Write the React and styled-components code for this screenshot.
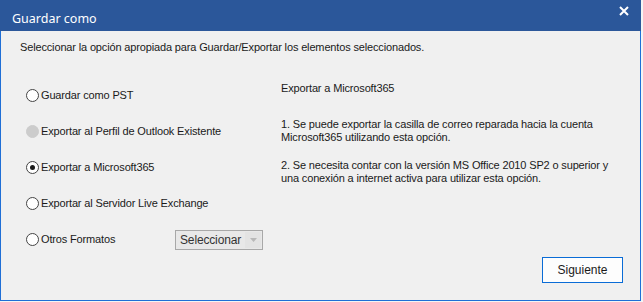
import React, { useState } from "react";
import styled, { createGlobalStyle } from "styled-components";

const GlobalStyle = createGlobalStyle`
  body {
    margin: 0;
    background: #f4f4f4;
    font-family: "Liberation Sans", Arial, sans-serif;
  }
`;

const options = [
  { id: "pst", label: "Guardar como PST" },
  { id: "outlook", label: "Exportar al Perfil de Outlook Existente", disabled: true },
  { id: "m365", label: "Exportar a Microsoft365" },
  { id: "live", label: "Exportar al Servidor Live Exchange" },
  { id: "otros", label: "Otros Formatos", select: true },
];

const App = () => {
  const [selected, setSelected] = useState("m365");

  return (
    <>
      <GlobalStyle />
      <Window>
        <TitleBar>
          <Title>Guardar como</Title>
          <CloseBtn aria-label="Cerrar">
            <svg width="10" height="10" viewBox="0 0 10 10">
              <path d="M1 1 L9 9 M9 1 L1 9" stroke="#fff" strokeWidth="2" />
            </svg>
          </CloseBtn>
        </TitleBar>
        <Body>
          <Intro>Seleccionar la opción apropiada para Guardar/Exportar los elementos seleccionados.</Intro>
          <Columns>
            <OptionList>
              {options.map((o) => (
                <OptionRow key={o.id}>
                  <RadioLabel onClick={() => !o.disabled && setSelected(o.id)}>
                    <Radio $checked={selected === o.id} $disabled={o.disabled} />
                    {o.label}
                  </RadioLabel>
                  {o.select && (
                    <SelectBox>
                      <span>Seleccionar</span>
                      <Arrow>
                        <svg width="7" height="4" viewBox="0 0 7 4">
                          <path d="M0 0 L7 0 L3.5 4 Z" fill="#b8b8b8" />
                        </svg>
                      </Arrow>
                    </SelectBox>
                  )}
                </OptionRow>
              ))}
            </OptionList>
            <Info>
              <InfoTitle>Exportar a Microsoft365</InfoTitle>
              <Para>
                1. Se puede exportar la casilla de correo reparada hacia la cuenta
                <br />
                Microsoft365 utilizando esta opción.
              </Para>
              <Para>
                2. Se necesita contar con la versión MS Office 2010 SP2 o superior y
                <br />
                una conexión a internet activa para utilizar esta opción.
              </Para>
            </Info>
          </Columns>
          <Footer>
            <NextButton>Siguiente</NextButton>
          </Footer>
        </Body>
      </Window>
    </>
  );
};

const Window = styled.div`
  width: 641px;
  height: 301px;
  box-sizing: border-box;
  border: 1px solid #1f6fd6;
  border-top: none;
  background: #f0f0f0;
  display: flex;
  flex-direction: column;
`;

const TitleBar = styled.div`
  height: 31px;
  background: #2b579a;
  display: flex;
  align-items: center;
  justify-content: space-between;
  padding: 0 12px 0 12px;
  margin: 0 -1px;
`;

const Title = styled.span`
  color: #fff;
  font-family: "Noto Sans", "Open Sans", sans-serif;
  font-size: 12.5px;
  padding-top: 6px;
`;

const CloseBtn = styled.button`
  background: transparent;
  border: none;
  padding: 0;
  margin-top: -10px;
  display: flex;
  cursor: pointer;
`;

const Body = styled.div`
  flex: 1;
  display: flex;
  flex-direction: column;
  padding: 10px 17px 17px 19px;
  font-size: 11px;
  letter-spacing: -0.15px;
  color: #1a1a1a;
`;

const Intro = styled.div`
  line-height: 13px;
`;

const Columns = styled.div`
  display: flex;
  margin-top: 27px;
`;

const OptionList = styled.div`
  width: 255px;
  display: flex;
  flex-direction: column;
  padding-left: 6px;
  padding-top: 7px;
  gap: 22px;
`;

const OptionRow = styled.div`
  display: flex;
  align-items: flex-start;
  height: 14px;
`;

const RadioLabel = styled.label`
  display: flex;
  align-items: center;
  gap: 2px;
  width: 150px;
  white-space: nowrap;
  line-height: 14px;
  cursor: default;
`;

const Radio = styled.span`
  width: 11px;
  height: 11px;
  border-radius: 50%;
  border: 1px solid ${(p) => (p.$disabled ? "#cccccc" : "#444")};
  background: ${(p) => (p.$disabled ? "#cccccc" : "#fff")};
  display: inline-flex;
  align-items: center;
  justify-content: center;
  flex-shrink: 0;
  &::after {
    content: "";
    width: 5px;
    height: 5px;
    border-radius: 50%;
    background: #1a1a1a;
    display: ${(p) => (p.$checked ? "block" : "none")};
  }
`;

const SelectBox = styled.div`
  width: 86px;
  height: 18px;
  border: 1px solid #a8a8a8;
  background: #e8e8e8;
  display: flex;
  align-items: center;
  justify-content: space-between;
  margin-top: -2px;
  margin-left: -1px;
  font-size: 12px;
  span {
    padding-left: 4px;
    color: #333;
  }
`;

const Arrow = styled.div`
  width: 16px;
  height: 16px;
  margin-right: 1px;
  display: flex;
  align-items: center;
  justify-content: center;
  background: #e3e3e3;
`;

const Info = styled.div`
  display: flex;
  flex-direction: column;
  line-height: 13px;
  padding-top: 1px;
`;

const InfoTitle = styled.div`
  margin-bottom: 23px;
`;

const Para = styled.p`
  margin: 0 0 15px;
`;

const Footer = styled.div`
  margin-top: auto;
  display: flex;
  justify-content: flex-end;
`;

const NextButton = styled.button`
  width: 81px;
  height: 26px;
  background: #fdfdfd;
  border: 1px solid #0a6cd6;
  font-family: "Liberation Sans", Arial, sans-serif;
  font-size: 12px;
  color: #1a1a1a;
`;

export default App;
